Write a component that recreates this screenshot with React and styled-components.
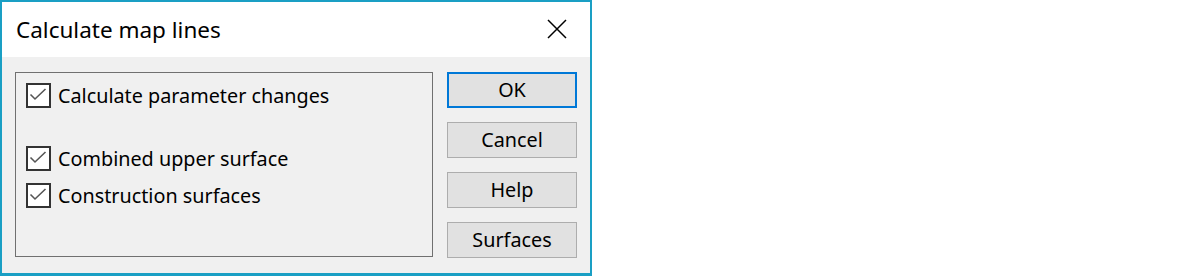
import styled, { createGlobalStyle } from "styled-components";

const GlobalStyle = createGlobalStyle`
  body {
    margin: 0;
    background: #ffffff;
    font-family: "Noto Sans", "Open Sans", sans-serif;
  }
`;

const Dialog = styled.div`
  width: 592px;
  height: 276px;
  box-sizing: border-box;
  border: 2px solid #1a9fc4;
  border-bottom-width: 3px;
  display: flex;
  flex-direction: column;
  background: #f0f0f0;
`;

const TitleBar = styled.div`
  height: 55px;
  background: #ffffff;
  display: flex;
  align-items: center;
  justify-content: space-between;
  padding: 0 23px 0 14px;
  flex-shrink: 0;
`;

const Title = styled.span`
  font-size: 22.5px;
  color: #000;
  padding-bottom: 1px;
`;

const CloseBtn = styled.button`
  all: unset;
  width: 20px;
  height: 20px;
  display: flex;
  margin-bottom: 2px;
`;

const Body = styled.div`
  flex: 1;
  display: flex;
  gap: 14px;
  padding: 15px 0 0 13px;
`;

const GroupBox = styled.div`
  width: 418px;
  height: 185px;
  box-sizing: border-box;
  border: 1px solid #707070;
  padding: 10px;
  display: flex;
  flex-direction: column;
`;

const Row = styled.label`
  display: flex;
  align-items: center;
  gap: 7px;
  height: 25px;
  margin-top: ${(p) => p.$top}px;
  font-size: 19.8px;
  color: #000;
`;

const Box = styled.span`
  width: 25px;
  height: 25px;
  box-sizing: border-box;
  border: 2px solid #333333;
  background: #ffffff;
  display: flex;
  flex-shrink: 0;
`;

const Buttons = styled.div`
  display: flex;
  flex-direction: column;
  gap: 14px;
`;

const Button = styled.button`
  width: 130px;
  height: 36px;
  box-sizing: border-box;
  background: #e1e1e1;
  border: ${(p) => (p.$default ? "2px solid #0078d7" : "1px solid #adadad")};
  font-family: "Noto Sans", "Open Sans", sans-serif;
  font-size: 19.8px;
  color: #000;
  padding: 0 0 2px;
  margin: 0;
`;

const Check = ({ label, top }) => (
  <Row $top={top}>
    <Box>
      <svg width="21" height="21" viewBox="0 0 21 21">
        <polyline
          points="2.5,9.5 7,14 17.5,4"
          fill="none"
          stroke="#555555"
          strokeWidth="1.6"
        />
      </svg>
    </Box>
    {label}
  </Row>
);

export default function App() {
  return (
    <>
      <GlobalStyle />
      <Dialog>
        <TitleBar>
          <Title>Calculate map lines</Title>
          <CloseBtn>
            <svg width="20" height="20" viewBox="0 0 20 20">
              <path d="M1 1L19 19M19 1L1 19" stroke="#000" strokeWidth="1.5" />
            </svg>
          </CloseBtn>
        </TitleBar>
        <Body>
          <GroupBox>
            <Check label="Calculate parameter changes" top={0} />
            <Check label="Combined upper surface" top={38} />
            <Check label="Construction surfaces" top={12} />
          </GroupBox>
          <Buttons>
            <Button $default>OK</Button>
            <Button>Cancel</Button>
            <Button>Help</Button>
            <Button>Surfaces</Button>
          </Buttons>
        </Body>
      </Dialog>
    </>
  );
}
